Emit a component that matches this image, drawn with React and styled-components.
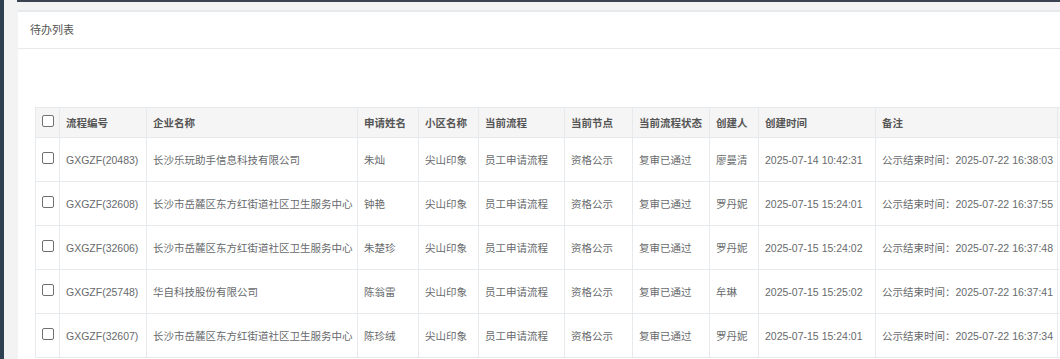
import React from 'react';
import styled, { createGlobalStyle } from 'styled-components';

const GlobalStyle = createGlobalStyle`
  html, body {
    margin: 0;
    padding: 0;
    overflow: hidden;
    background: #f3f3f4;
    font-family: "Liberation Sans", Arial, "Noto Sans CJK SC", sans-serif;
    color: #676a6c;
  }
`;

const Layout = styled.div`
  display: flex;
  width: 1060px;
  height: 359px;
  overflow: hidden;
`;

const SideNav = styled.div`
  width: 4px;
  flex: none;
  background: #2f4050;
`;

const Main = styled.div`
  flex: 1;
  min-width: 0;
  display: flex;
  flex-direction: column;
`;

const TopBar = styled.div`
  height: 2px;
  background: #3a4350;
  margin-left: 13px;
`;

const Wrapper = styled.div`
  flex: 1;
  padding: 8px 0 0 14px;
  min-width: 0;
`;

const Panel = styled.div`
  background: #fff;
  border-top: 2px solid #e7eaec;
  height: 100%;
  width: 1100px;
`;

const PanelTitle = styled.div`
  height: 36px;
  line-height: 36px;
  padding-left: 12px;
  font-size: 11px;
  color: #555;
  border-bottom: 1px solid #e7eaec;
`;

const PanelBody = styled.div`
  padding: 58px 0 0 17px;
`;

const Table = styled.table`
  border-collapse: collapse;
  table-layout: fixed;
  width: 1100px;
  font-size: 10.5px;
  border-top: 1px solid #e7eaec;
  border-left: 1px solid #e7eaec;
`;

const Th = styled.th`
  height: 29px;
  background: #f5f5f6;
  color: #555;
  font-weight: bold;
  text-align: left;
  padding: 0 6px;
  border-right: 1px solid #e7eaec;
  border-bottom: 1px solid #e7eaec;
  white-space: nowrap;
  overflow: hidden;
`;

const Td = styled.td`
  height: 43px;
  padding: 0 6px;
  text-align: left;
  color: #676a6c;
  border-right: 1px solid #e7eaec;
  border-bottom: 1px solid #e7eaec;
  white-space: nowrap;
  overflow: hidden;
`;

const CheckCell = styled(Td)`
  padding: 0;
  text-align: center;
`;

const CheckHead = styled(Th)`
  padding: 0;
  text-align: center;
`;

const Box = styled.span`
  display: inline-block;
  width: 10px;
  height: 10px;
  border: 1px solid #6f7274;
  border-radius: 2px;
  background: #fff;
  vertical-align: middle;
  margin-top: -6px;
`;

const widths = [24, 87, 211, 61, 60, 86, 68, 77, 49, 117, 182, 78];
const headers = ['流程编号', '企业名称', '申请姓名', '小区名称', '当前流程', '当前节点', '当前流程状态', '创建人', '创建时间', '备注', ''];

const rows = [
  ['GXGZF(20483)', '长沙乐玩助手信息科技有限公司', '朱灿', '尖山印象', '员工申请流程', '资格公示', '复审已通过', '廖曼清', '2025-07-14 10:42:31', '公示结束时间：2025-07-22 16:38:03'],
  ['GXGZF(32608)', '长沙市岳麓区东方红街道社区卫生服务中心', '钟艳', '尖山印象', '员工申请流程', '资格公示', '复审已通过', '罗丹妮', '2025-07-15 15:24:01', '公示结束时间：2025-07-22 16:37:55'],
  ['GXGZF(32606)', '长沙市岳麓区东方红街道社区卫生服务中心', '朱楚珍', '尖山印象', '员工申请流程', '资格公示', '复审已通过', '罗丹妮', '2025-07-15 15:24:02', '公示结束时间：2025-07-22 16:37:48'],
  ['GXGZF(25748)', '华自科技股份有限公司', '陈翁雷', '尖山印象', '员工申请流程', '资格公示', '复审已通过', '牟琳', '2025-07-15 15:25:02', '公示结束时间：2025-07-22 16:37:41'],
  ['GXGZF(32607)', '长沙市岳麓区东方红街道社区卫生服务中心', '陈珍绒', '尖山印象', '员工申请流程', '资格公示', '复审已通过', '罗丹妮', '2025-07-15 15:24:01', '公示结束时间：2025-07-22 16:37:34'],
];

export default function App() {
  return (
    <>
      <GlobalStyle />
      <Layout>
        <SideNav />
        <Main>
          <TopBar />
          <Wrapper>
            <Panel>
              <PanelTitle>待办列表</PanelTitle>
              <PanelBody>
                <Table>
                  <colgroup>
                    {widths.map((w, i) => <col key={i} style={{ width: w }} />)}
                  </colgroup>
                  <thead>
                    <tr>
                      <CheckHead><Box /></CheckHead>
                      {headers.map((h, i) => <Th key={i}>{h}</Th>)}
                    </tr>
                  </thead>
                  <tbody>
                    {rows.map((r, ri) => (
                      <tr key={ri}>
                        <CheckCell><Box /></CheckCell>
                        {r.map((c, ci) => <Td key={ci}>{c}</Td>)}
                        <Td />
                      </tr>
                    ))}
                  </tbody>
                </Table>
              </PanelBody>
            </Panel>
          </Wrapper>
        </Main>
      </Layout>
    </>
  );
}
